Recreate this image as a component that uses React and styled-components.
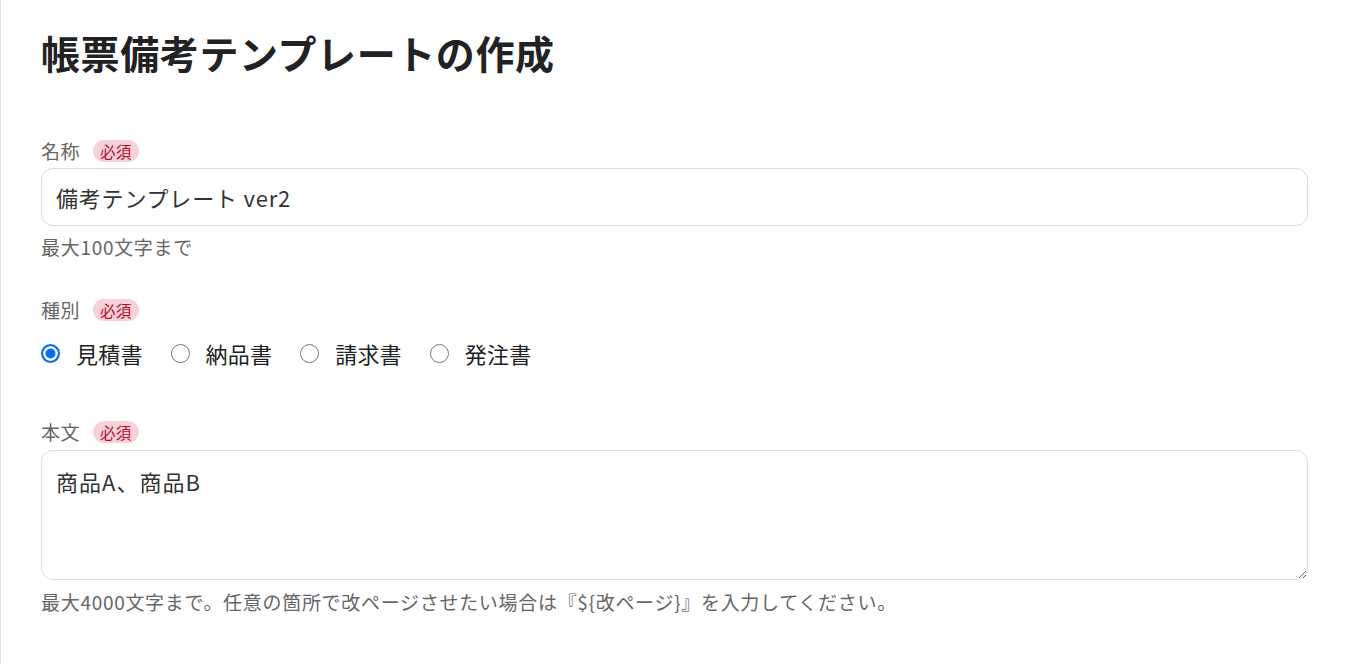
import React from "react";
import styled, { createGlobalStyle } from "styled-components";

const GlobalStyle = createGlobalStyle`
  html, body {
    margin: 0;
    padding: 0;
    background: #fff;
  }
  body {
    font-family: "Noto Sans CJK JP", "Noto Sans", sans-serif;
    color: #333;
  }
  * {
    box-sizing: border-box;
  }
`;

const Page = styled.div`
  min-height: 100vh;
  border-left: 1px solid #e3e3e3;
  padding: 28px 40px 40px 40px;
`;

const Title = styled.h1`
  margin: 0 0 63px 0;
  font-size: 39px;
  line-height: 48px;
  font-weight: 700;
  color: #222;
  letter-spacing: 0.6px;
`;

const Field = styled.div`
  display: flex;
  flex-direction: column;
  margin-bottom: ${(p) => p.$gap || 0}px;
`;

const LabelRow = styled.div`
  display: flex;
  align-items: center;
  gap: 13px;
  height: 24px;
`;

const Label = styled.label`
  font-size: 19px;
  line-height: 24px;
  color: #666;
  letter-spacing: 0.5px;
`;

const Required = styled.span`
  display: inline-flex;
  align-items: center;
  height: 22px;
  padding: 0 7px;
  border-radius: 11px;
  background: #f9d2d9;
  color: #b0102f;
  font-size: 15.5px;
  line-height: 22px;
  letter-spacing: 0.3px;
`;

const TextInput = styled.input`
  margin-top: 5px;
  width: 100%;
  height: 58px;
  border: 1px solid #dcdcdc;
  border-radius: 12px;
  padding: 0 14px;
  font-family: inherit;
  font-size: 22px;
  letter-spacing: 0.8px;
  color: #333;
  outline: none;
  background: #fff;
`;

const TextArea = styled.textarea`
  margin-top: 6px;
  width: 100%;
  height: 130px;
  border: 1px solid #dcdcdc;
  border-radius: 12px;
  padding: 15px 14px;
  font-family: inherit;
  font-size: 22px;
  line-height: 30px;
  letter-spacing: 1px;
  color: #333;
  outline: none;
  background: #fff;
  resize: vertical;
  display: block;
`;

const Help = styled.p`
  margin: ${(p) => p.$top || 9}px 0 0 0;
  font-size: 19px;
  line-height: 24px;
  letter-spacing: 0.7px;
  color: #666;
`;

const RadioGroup = styled.div`
  display: flex;
  align-items: center;
  gap: 28px;
  margin-top: 16px;
  height: 30px;
`;

const RadioOption = styled.label`
  display: flex;
  align-items: center;
  gap: 16px;
  font-size: 22px;
  line-height: 30px;
  letter-spacing: 0.2px;
  color: #222;
  cursor: pointer;
`;

const Radio = styled.input.attrs({ type: "radio" })`
  appearance: none;
  margin: 0;
  width: 19px;
  height: 19px;
  border-radius: 50%;
  border: 1.5px solid #767676;
  background: #fff;
  flex-shrink: 0;

  &:checked {
    border: 2px solid #0b6cf4;
    box-shadow: inset 0 0 0 2.5px #fff;
    background: #0b6cf4;
  }
`;

const kinds = ["見積書", "納品書", "請求書", "発注書"];

export default function App() {
  return (
    <>
      <GlobalStyle />
      <Page>
        <Title>帳票備考テンプレートの作成</Title>

        <Field $gap={39}>
          <LabelRow>
            <Label>名称</Label>
            <Required>必須</Required>
          </LabelRow>
          <TextInput defaultValue="備考テンプレート ver2" />
          <Help>最大100文字まで</Help>
        </Field>

        <Field $gap={52}>
          <LabelRow>
            <Label>種別</Label>
            <Required>必須</Required>
          </LabelRow>
          <RadioGroup>
            {kinds.map((k, i) => (
              <RadioOption key={k}>
                <Radio name="kind" defaultChecked={i === 0} />
                {k}
              </RadioOption>
            ))}
          </RadioGroup>
        </Field>

        <Field>
          <LabelRow>
            <Label>本文</Label>
            <Required>必須</Required>
          </LabelRow>
          <TextArea defaultValue="商品A、商品B" />
          <Help $top={10}>
            最大4000文字まで。任意の箇所で改ページさせたい場合は『${"{"}改ページ{"}"}』を入力してください。
          </Help>
        </Field>
      </Page>
    </>
  );
}
